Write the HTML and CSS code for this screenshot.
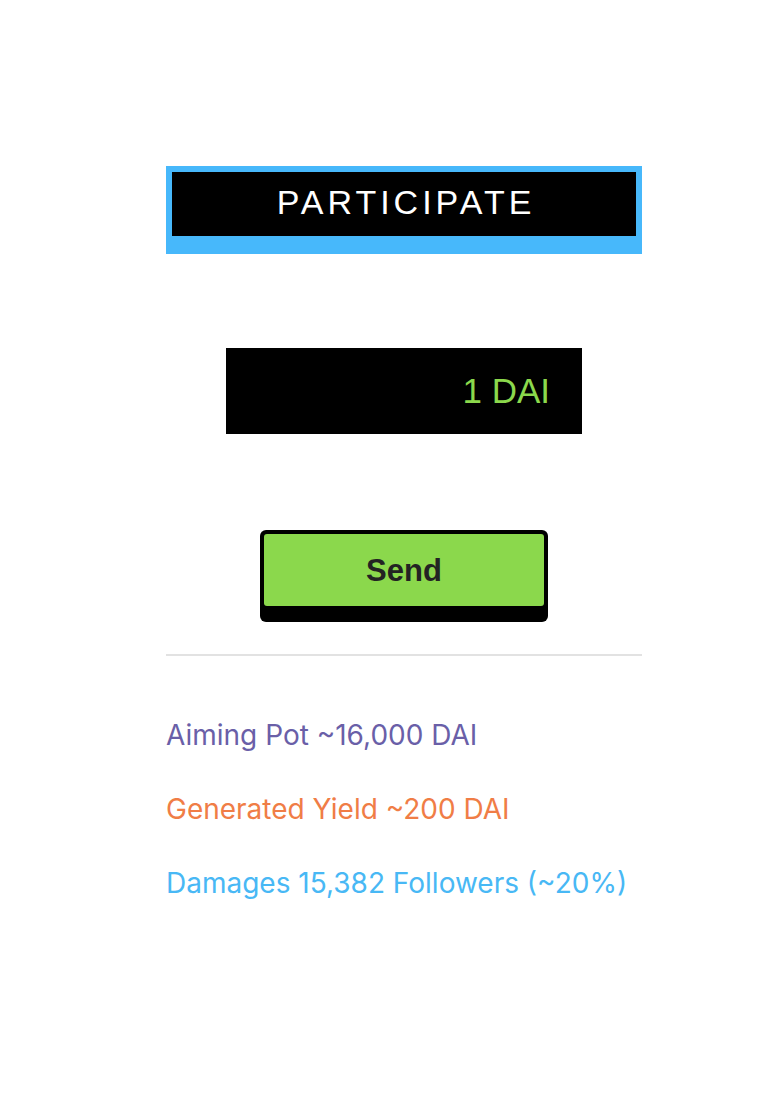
FILE: index.html
```html
<!DOCTYPE html>
<html>
<head>
<meta charset="utf-8">
<link rel="stylesheet" href="styles.css">
</head>
<body>
<main class="panel">
  <div class="title-box"><div class="title-inner">PARTICIPATE</div></div>
  <div class="amount-row"><div class="amount">1 DAI</div></div>
  <div class="send-row"><button class="send"><span class="send-face">Send</span></button></div>
  <hr class="divider">
  <ul class="stats">
    <li class="stat pot">Aiming Pot ~16,000 DAI</li>
    <li class="stat yield">Generated Yield ~200 DAI</li>
    <li class="stat damages">Damages 15,382 Followers (~20%)</li>
  </ul>
</main>
</body>
</html>
```
FILE: styles.css
```css
html, body { margin: 0; padding: 0; background: #fff; }
body { font-family: "Liberation Sans", Arial, sans-serif; }
.panel {
  width: 476px;
  margin-left: 166px;
  padding-top: 166px;
  display: flex;
  flex-direction: column;
}
.title-box {
  background: #47b8fb;
  padding: 6px 6px 18px 6px;
}
.title-inner {
  background: #000;
  height: 64px;
  display: flex;
  align-items: center;
  justify-content: center;
  color: #fff;
  font-size: 34px;
  letter-spacing: 4px;
  padding-left: 4px;
  padding-bottom: 3px;
  box-sizing: border-box;
}
.amount-row {
  display: flex;
  justify-content: center;
  margin-top: 94px;
}
.amount {
  width: 356px;
  height: 86px;
  box-sizing: border-box;
  background: #000;
  color: #8bd84c;
  font-size: 35px;
  display: flex;
  align-items: center;
  justify-content: flex-end;
  padding-right: 32px;
}
.send-row {
  display: flex;
  justify-content: center;
  margin-top: 96px;
}
.send {
  width: 288px;
  height: 92px;
  box-sizing: border-box;
  background: #000;
  border: none;
  border-radius: 6px;
  padding: 4px 4px 16px 4px;
  margin: 0;
  display: flex;
}
.send-face {
  flex: 1;
  background: #8bd84c;
  border-radius: 3px;
  display: flex;
  align-items: center;
  justify-content: center;
  font-family: "Liberation Sans", Arial, sans-serif;
  font-weight: bold;
  font-size: 31px;
  color: #232323;
  padding-top: 2px;
}
.divider {
  border: none;
  height: 2px;
  background: #e2e2e2;
  margin: 32px 0 0 0;
}
.stats {
  list-style: none;
  margin: 42px 0 0 0;
  padding: 0;
  font-family: Inter, "Noto Sans", sans-serif;
  font-size: 28px;
  line-height: 74px;
}
.stat { margin: 0; }
.pot { color: #6a5fa8; }
.yield { color: #f07d46; }
.damages { color: #48b8f5; }
```
